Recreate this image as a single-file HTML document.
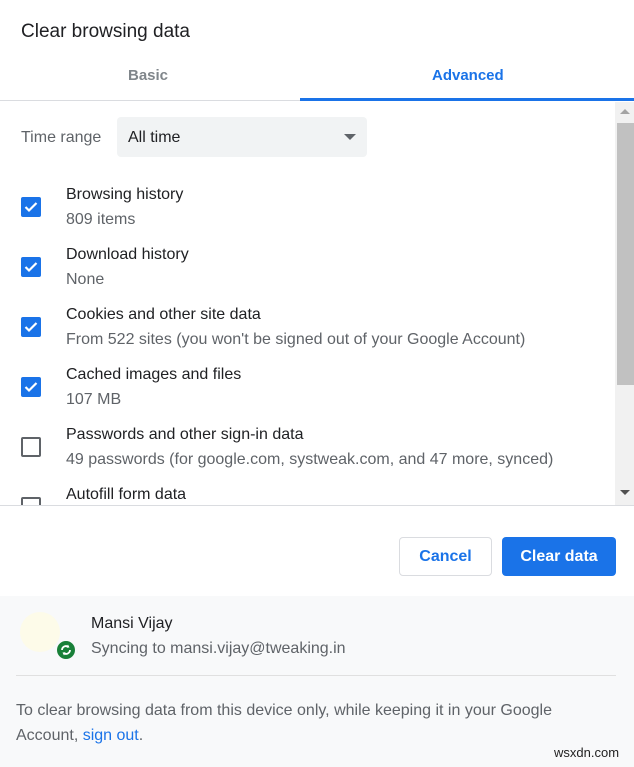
<!DOCTYPE html>
<html><head><style>
*{margin:0;padding:0;box-sizing:border-box}
body{width:634px;height:767px;background:#fff;font-family:"Liberation Sans",Arial,sans-serif;position:relative;overflow:hidden;color:#202124}
.a{position:absolute;white-space:nowrap}
.cb{position:absolute;left:21px;width:20px;height:20px;border-radius:2px;background:#1a73e8}
.cb svg{position:absolute;left:3px;top:4px}
.ub{position:absolute;left:21px;width:20px;height:20px;border-radius:2px;border:2px solid #5f6368}
.t1{position:absolute;left:66px;font-size:16px;color:#202124}
.t2{position:absolute;left:66px;font-size:16px;color:#5f6368}
</style></head><body>
<div class="a" style="left:21px;top:21px;font-size:19px">Clear browsing data</div>
<div class="a" style="left:128px;top:67px;font-size:15px;font-weight:bold;color:#80868b">Basic</div>
<div class="a" style="left:432px;top:67px;font-size:15px;font-weight:bold;color:#1a73e8">Advanced</div>
<div class="a" style="left:0;top:100px;width:634px;height:1px;background:#dadce0"></div>
<div class="a" style="left:300px;top:98px;width:334px;height:3px;background:#1a73e8"></div>

<div class="a" style="left:615px;top:102px;width:19px;height:403px;background:#f1f1f1"></div>
<div class="a" style="left:617px;top:123px;width:17px;height:262px;background:#c1c1c1"></div>
<div class="a" style="left:620px;top:109px;width:0;height:0;border-left:5px solid transparent;border-right:5px solid transparent;border-bottom:5px solid #a3a3a3"></div>
<div class="a" style="left:620px;top:490px;width:0;height:0;border-left:5px solid transparent;border-right:5px solid transparent;border-top:5px solid #505050"></div>

<div class="a" style="left:21px;top:129px;font-size:16px;color:#5f6368">Time range</div>
<div class="a" style="left:117px;top:117px;width:250px;height:40px;background:#f1f3f4;border-radius:4px"></div>
<div class="a" style="left:128px;top:129px;font-size:16px">All time</div>
<div class="a" style="left:344px;top:134px;width:0;height:0;border-left:6px solid transparent;border-right:6px solid transparent;border-top:6px solid #5f6368"></div>

<div class="cb" style="top:197px"><svg width="14" height="12" viewBox="0 0 14 12"><path d="M1.5 6l3.5 3.5L12.5 2" stroke="#fff" stroke-width="2.2" fill="none"/></svg></div>
<div class="t1" style="top:186px">Browsing history</div><div class="t2" style="top:211px">809 items</div>
<div class="cb" style="top:257px"><svg width="14" height="12" viewBox="0 0 14 12"><path d="M1.5 6l3.5 3.5L12.5 2" stroke="#fff" stroke-width="2.2" fill="none"/></svg></div>
<div class="t1" style="top:246px">Download history</div><div class="t2" style="top:271px">None</div>
<div class="cb" style="top:317px"><svg width="14" height="12" viewBox="0 0 14 12"><path d="M1.5 6l3.5 3.5L12.5 2" stroke="#fff" stroke-width="2.2" fill="none"/></svg></div>
<div class="t1" style="top:306px">Cookies and other site data</div><div class="t2" style="top:331px">From 522 sites (you won't be signed out of your Google Account)</div>
<div class="cb" style="top:377px"><svg width="14" height="12" viewBox="0 0 14 12"><path d="M1.5 6l3.5 3.5L12.5 2" stroke="#fff" stroke-width="2.2" fill="none"/></svg></div>
<div class="t1" style="top:366px">Cached images and files</div><div class="t2" style="top:391px">107 MB</div>
<div class="ub" style="top:437px"></div>
<div class="t1" style="top:426px">Passwords and other sign-in data</div><div class="t2" style="top:451px">49 passwords (for google.com, systweak.com, and 47 more, synced)</div>
<div class="a" style="left:0;top:480px;width:615px;height:25px;overflow:hidden">
<div class="ub" style="top:17px"></div><div class="t1" style="top:6px">Autofill form data</div></div>
<div class="a" style="left:0;top:505px;width:634px;height:1px;background:#dadce0"></div>

<div class="a" style="left:399px;top:537px;width:93px;height:39px;border:1px solid #dadce0;border-radius:4px;font-size:16px;font-weight:bold;color:#1a73e8;text-align:center;line-height:37px">Cancel</div>
<div class="a" style="left:502px;top:537px;width:114px;height:39px;background:#1a73e8;border-radius:4px;font-size:16px;font-weight:bold;color:#fff;text-align:center;line-height:39px">Clear data</div>

<div class="a" style="left:0;top:596px;width:634px;height:171px;background:#f8f9fa"></div>
<div class="a" style="left:20px;top:612px;width:40px;height:40px;border-radius:50%;background:#fdfbe9"></div>
<div class="a" style="left:55px;top:639px;width:22px;height:22px;border-radius:50%;background:#188038;border:2px solid #f8f9fa"><svg width="18" height="18" viewBox="0 0 18 18"><path d="M5 9a4 4 0 0 1 6.5-3M13 9a4 4 0 0 1-6.5 3" stroke="#fff" stroke-width="1.8" fill="none"/><path d="M11 3.5l1.5 3-3 .3zM7 14.5l-1.5-3 3-.3z" fill="#fff"/></svg></div>
<div class="a" style="left:91px;top:615px;font-size:16px">Mansi Vijay</div>
<div class="a" style="left:91px;top:640px;font-size:16px;color:#5f6368">Syncing to mansi.vijay@tweaking.in</div>
<div class="a" style="left:16px;top:675px;width:600px;height:1px;background:#e0e0e0"></div>
<div class="a" style="left:16px;top:698px;font-size:16px;color:#5f6368;line-height:25px;white-space:normal;width:560px">To clear browsing data from this device only, while keeping it in your Google Account, <span style="color:#1a73e8">sign out</span>.</div>
<div class="a" style="left:554px;top:745px;font-size:13px;color:#222">wsxdn.com</div>
</body></html>
